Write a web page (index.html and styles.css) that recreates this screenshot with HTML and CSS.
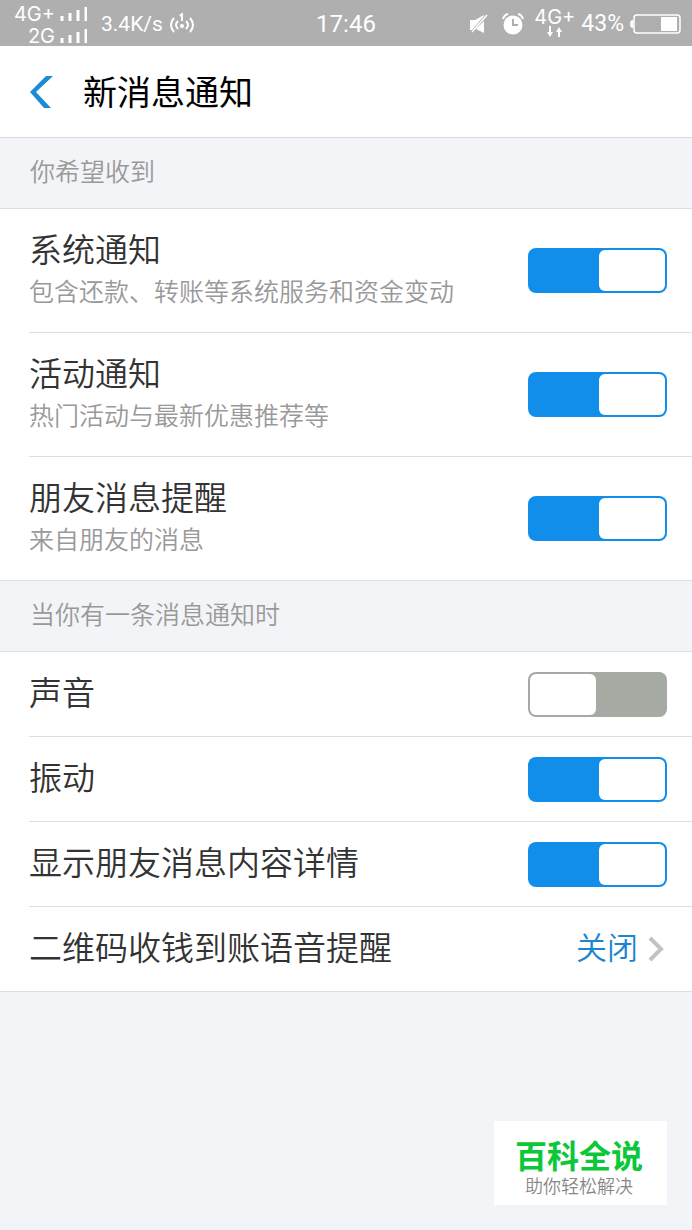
FILE: index.html
```html
<!DOCTYPE html>
<html lang="zh-CN">
<head>
<meta charset="utf-8">
<meta name="viewport" content="width=device-width, initial-scale=1">
<title>新消息通知</title>
<link rel="stylesheet" href="styles.css">
</head>
<body>
<div class="status-bar">
  <div class="status-left">
    <div class="networks">
      <div class="network"><span>4G+</span>
        <svg width="27" height="14" viewBox="0 0 27 14" aria-hidden="true"><path d="M2 14V9M10 14V6M18 14V3M26 14V0" stroke="currentColor" stroke-width="3"/></svg>
      </div>
      <div class="network"><span>2G</span>
        <svg width="27" height="14" viewBox="0 0 27 14" aria-hidden="true"><path d="M2 14V9M10 14V6M18 14V3M26 14V0" stroke="currentColor" stroke-width="3"/></svg>
      </div>
    </div>
    <span class="speed">3.4K/s</span>
    <svg class="hotspot" width="26" height="22" viewBox="0 0 26 22" fill="none" stroke="currentColor" stroke-width="2" aria-hidden="true"><path d="M5 5Q-1 12 5 19M9 8Q5 12 9 16M17 8Q21 12 17 16M21 5Q27 12 21 19M11 3L13 1V8"/><circle cx="13" cy="13" r="2" fill="currentColor" stroke="none"/></svg>
  </div>
  <time class="clock">17:46</time>
  <div class="status-right">
    <svg class="mute" width="18" height="20" viewBox="0 0 18 20" aria-hidden="true"><path d="M0 6H5L14 1V2L2 16H0ZM14 7V19L6 15Z" fill="currentColor"/><path d="M17 1L2 18" stroke="currentColor" stroke-width="1.5"/></svg>
    <svg class="alarm" width="22" height="22" viewBox="0 0 22 22" aria-hidden="true"><circle cx="11" cy="12" r="9.5" fill="currentColor"/><path d="M1 6Q2 2 6 1M16 1Q20 2 21 6" fill="none" stroke="currentColor" stroke-width="2"/><path d="M11 6V12H16" fill="none" stroke="#afafaf" stroke-width="2"/></svg>
    <div class="data"><span>4G+</span>
      <svg width="18" height="12" viewBox="0 0 18 12" aria-hidden="true"><path d="M4 0V8M13 11V4" stroke="currentColor" stroke-width="2"/><path d="M1 6H7L4 11ZM10 6L13 1L16 6Z" fill="currentColor"/></svg>
    </div>
    <span class="percent">43%</span>
    <svg class="battery" width="51" height="20" viewBox="0 0 51 20" aria-hidden="true"><rect x="4" y="1" width="46" height="18" rx="3" fill="none" stroke="currentColor" stroke-width="1.5"/><rect x="31" y="3" width="16" height="14" fill="currentColor"/><path d="M3 6Q0 6 0 10Q0 14 3 14Z" fill="currentColor"/></svg>
  </div>
</div>

<header class="header">
  <button class="back" type="button" aria-label="返回">
    <svg width="24" height="34" viewBox="0 0 24 34" aria-hidden="true"><path d="M17 1H24L7 17L22 33H15L1 17Z" fill="currentColor"/></svg>
  </button>
  <h1 class="title">新消息通知</h1>
</header>

<main>
  <section>
    <h2 class="section-title">你希望收到</h2>
    <div class="list">
      <label class="row row-tall"><span class="text"><span class="name">系统通知</span><span class="note">包含还款、转账等系统服务和资金变动</span></span><input class="switch" type="checkbox" checked></label>
      <label class="row row-tall"><span class="text"><span class="name">活动通知</span><span class="note">热门活动与最新优惠推荐等</span></span><input class="switch" type="checkbox" checked></label>
      <label class="row row-tall"><span class="text"><span class="name">朋友消息提醒</span><span class="note">来自朋友的消息</span></span><input class="switch" type="checkbox" checked></label>
    </div>
  </section>
  <section>
    <h2 class="section-title">当你有一条消息通知时</h2>
    <div class="list">
      <label class="row"><span class="name">声音</span><input class="switch" type="checkbox"></label>
      <label class="row"><span class="name">振动</span><input class="switch" type="checkbox" checked></label>
      <label class="row"><span class="name">显示朋友消息内容详情</span><input class="switch" type="checkbox" checked></label>
      <a class="row" href="#voice"><span class="name">二维码收钱到账语音提醒</span><span class="value"><span class="value-text">关闭</span>
        <svg class="chevron" width="16" height="26" viewBox="0 0 16 26" aria-hidden="true"><path d="M2 2L13 13L2 24" fill="none" stroke="currentColor" stroke-width="4"/></svg></span></a>
    </div>
  </section>
</main>

<aside class="badge">
  <strong class="badge-name">百科全说</strong>
  <span class="badge-note">助你轻松解决</span>
</aside>
</body>
</html>
```

FILE: styles.css
```css
* {
  box-sizing: border-box;
}

body {
  position: relative;
  min-height: 100vh;
  margin: 0;
  background: #f2f4f8;
  color: #333;
  font-family: "Noto Sans CJK SC", sans-serif;
  font-weight: 350;
}

.status-bar {
  display: grid;
  grid-template-columns: 1fr auto 1fr;
  grid-template-rows: 44px;
  align-items: center;
  height: 46px;
  padding: 2px 11px 0;
  background: #afafaf;
  color: #fff;
  font-family: Roboto, sans-serif;
  font-weight: 400;
}

.status-left,
.status-right {
  display: flex;
  align-items: center;
}

.status-right {
  justify-content: flex-end;
}

.networks {
  width: 76px;
  margin-right: 14px;
  padding-top: 2px;
}

.network {
  display: flex;
  align-items: center;
  justify-content: flex-end;
  gap: 5px;
  font-family: Inter, sans-serif;
  font-size: 20px;
  line-height: 22px;
}

.speed {
  font-size: 21px;
  line-height: 28px;
}

.percent {
  font-size: 23px;
  line-height: 28px;
}

.hotspot {
  margin-left: 6px;
}

.clock {
  font-size: 24px;
  line-height: 28px;
}

.mute {
  margin-right: 14px;
}

.alarm {
  margin-right: 10px;
}

.data {
  display: flex;
  flex-direction: column;
  align-items: center;
  margin-right: 6px;
  padding-bottom: 2px;
  font-family: Inter, sans-serif;
  font-size: 20px;
  line-height: 18px;
}

.battery {
  margin-left: 6px;
}

.header {
  display: flex;
  align-items: center;
  gap: 30px;
  height: 92px;
  padding: 0 29px;
  border-bottom: 1px solid #d9dbde;
  background: #fff;
}

.back {
  display: flex;
  padding: 0;
  border: 0;
  background: none;
  color: #1b8bd4;
}

.title {
  margin: 0;
  padding-bottom: 2px;
  color: #000;
  font-size: 34px;
  font-weight: 400;
  line-height: 48px;
}

.section-title {
  margin: 0;
  padding: 14px 30px 20px;
  color: #999;
  font-size: 25px;
  font-weight: 350;
  line-height: 36px;
}

.list {
  padding-left: 29px;
  border-top: 1px solid #dddfe2;
  border-bottom: 1px solid #dddfe2;
  background: #fff;
}

.row {
  box-sizing: content-box;
  display: flex;
  align-items: center;
  justify-content: space-between;
  min-height: 84px;
  padding-right: 25px;
  color: inherit;
  text-decoration: none;
}

.row + .row {
  border-top: 1px solid #dedede;
}

.row-tall {
  min-height: 123px;
}

.text {
  display: flex;
  flex-direction: column;
  padding-bottom: 6px;
}

.name {
  padding-bottom: 6px;
  font-size: 33px;
  line-height: 42px;
}

.text .name {
  padding-bottom: 3px;
}

.note {
  color: #999;
  font-size: 25px;
  line-height: 36px;
}

.switch {
  flex: none;
  display: flex;
  width: 139px;
  height: 45px;
  margin: 0;
  padding: 2px;
  border-radius: 8px;
  background: #a5aaa3;
  appearance: none;
}

.switch::before {
  width: 66px;
  border-radius: 6px;
  background: #fff;
  content: "";
}

.switch:checked {
  justify-content: flex-end;
  background: #108ee9;
}

.value {
  display: flex;
  align-items: center;
  gap: 10px;
  margin-right: 3px;
  color: #1b86cf;
  font-size: 31px;
  line-height: 42px;
}

.value-text {
  padding-bottom: 6px;
}

.chevron {
  color: #c3c3c3;
}

.badge {
  position: absolute;
  right: 25px;
  bottom: 25px;
  display: flex;
  flex-direction: column;
  align-items: center;
  padding: 14px 24px 8px 21px;
  background: #fff;
}

.badge-name {
  color: #0bc839;
  font-size: 32px;
  font-weight: 700;
  line-height: 38px;
}

.badge-note {
  color: #888;
  font-size: 18px;
  line-height: 24px;
}
```
